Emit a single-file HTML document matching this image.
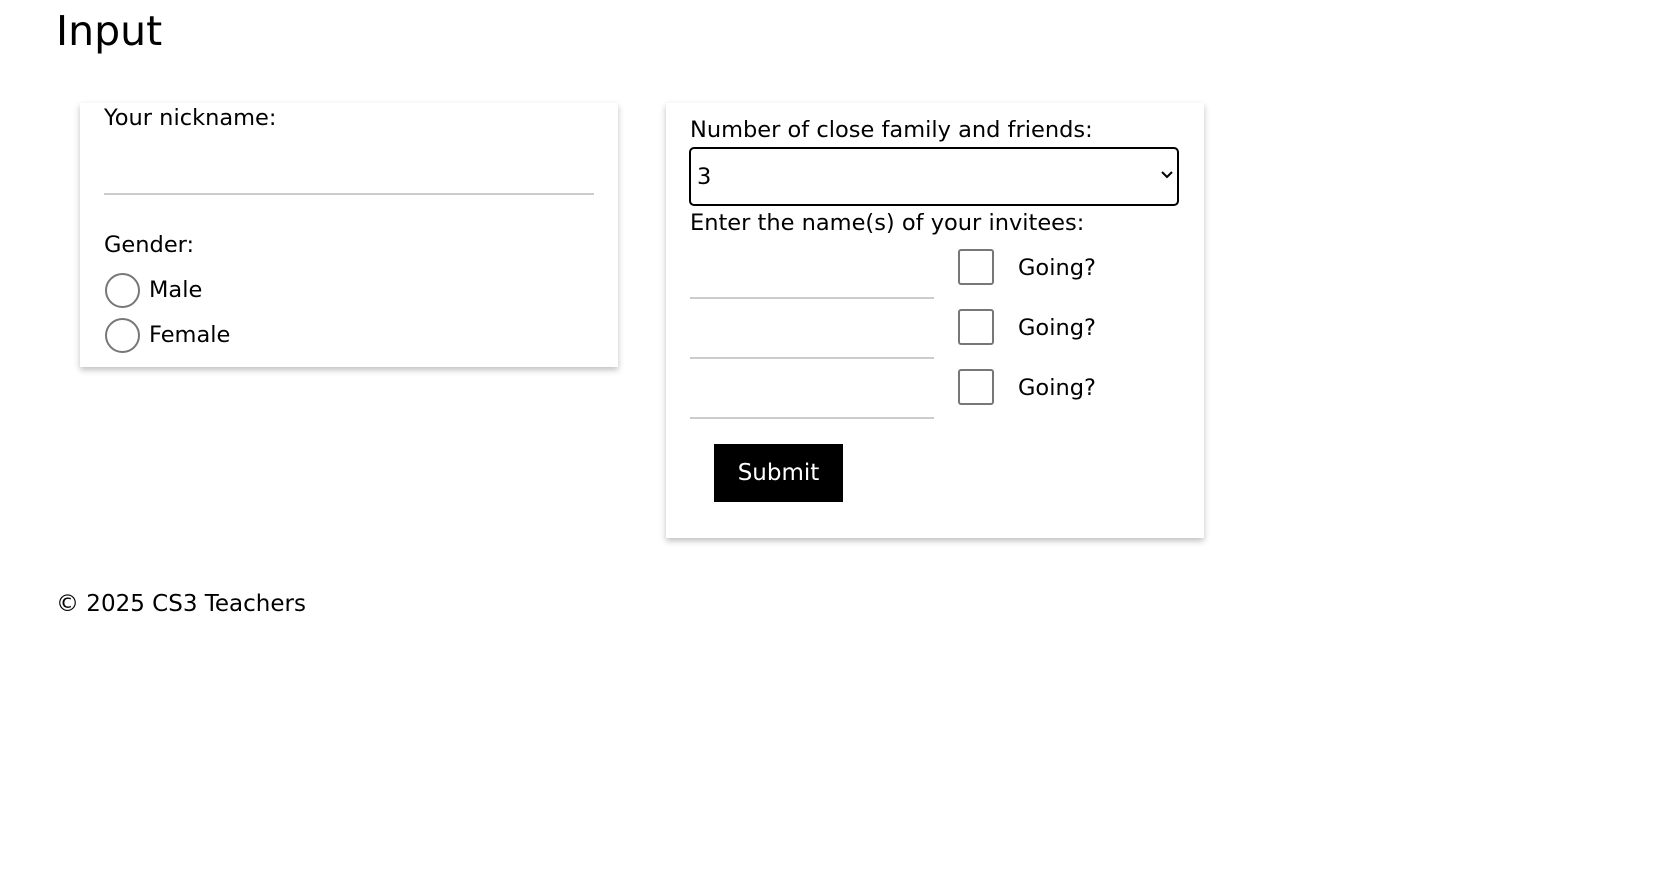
<!DOCTYPE html>
<html><head><meta charset="utf-8"><style>
*{box-sizing:border-box}
body{margin:0;width:1677px;height:892px;background:#fff;font-family:"DejaVu Sans","Liberation Sans",sans-serif;color:#000;position:relative;overflow:hidden}
.a{position:absolute;white-space:nowrap;font-size:22.5px;line-height:1}
.card{position:absolute;background:#fff;box-shadow:0 3px 6px rgba(0,0,0,.25)}
.line{position:absolute;height:2px;background:#ccc}
.radio{position:absolute;width:35px;height:35px;border:2px solid #777;border-radius:50%}
.cb{position:absolute;width:36px;height:36px;border:2px solid #777;border-radius:3px}
</style></head><body>
<div class="a" style="left:56px;top:11px;font-size:41px">Input</div>
<div class="card" style="left:80px;top:103px;width:538px;height:264px"></div>
<div class="a" style="left:104px;top:107px">Your nickname:</div>
<div class="line" style="left:104px;top:193px;width:490px"></div>
<div class="a" style="left:104px;top:234px">Gender:</div>
<div class="radio" style="left:105px;top:273px"></div>
<div class="a" style="left:149px;top:279px">Male</div>
<div class="radio" style="left:105px;top:318px"></div>
<div class="a" style="left:149px;top:324px">Female</div>
<div class="card" style="left:666px;top:103px;width:538px;height:435px"></div>
<div class="a" style="left:690px;top:119px">Number of close family and friends:</div>
<div style="position:absolute;left:689px;top:147px;width:490px;height:59px;border:2.5px solid #000;border-radius:5px"></div>
<div class="a" style="left:697px;top:166px">3</div>
<svg style="position:absolute;left:1160px;top:170px" width="14" height="10" viewBox="0 0 14 10"><path d="M2 2 L7 7 L12 2" fill="none" stroke="#000" stroke-width="2"/></svg>
<div class="a" style="left:690px;top:212px">Enter the name(s) of your invitees:</div>
<div class="line" style="left:690px;top:297px;width:244px"></div>
<div class="line" style="left:690px;top:357px;width:244px"></div>
<div class="line" style="left:690px;top:417px;width:244px"></div>
<div class="cb" style="left:958px;top:249px"></div>
<div class="cb" style="left:958px;top:309px"></div>
<div class="cb" style="left:958px;top:369px"></div>
<div class="a" style="left:1018px;top:257px">Going?</div>
<div class="a" style="left:1018px;top:317px">Going?</div>
<div class="a" style="left:1018px;top:377px">Going?</div>
<div style="position:absolute;left:714px;top:444px;width:129px;height:58px;background:#000;color:#fff;font-size:23px;display:flex;align-items:center;justify-content:center">Submit</div>
<div class="a" style="left:56px;top:593px;font-size:23px">© 2025 CS3 Teachers</div>
</body></html>
